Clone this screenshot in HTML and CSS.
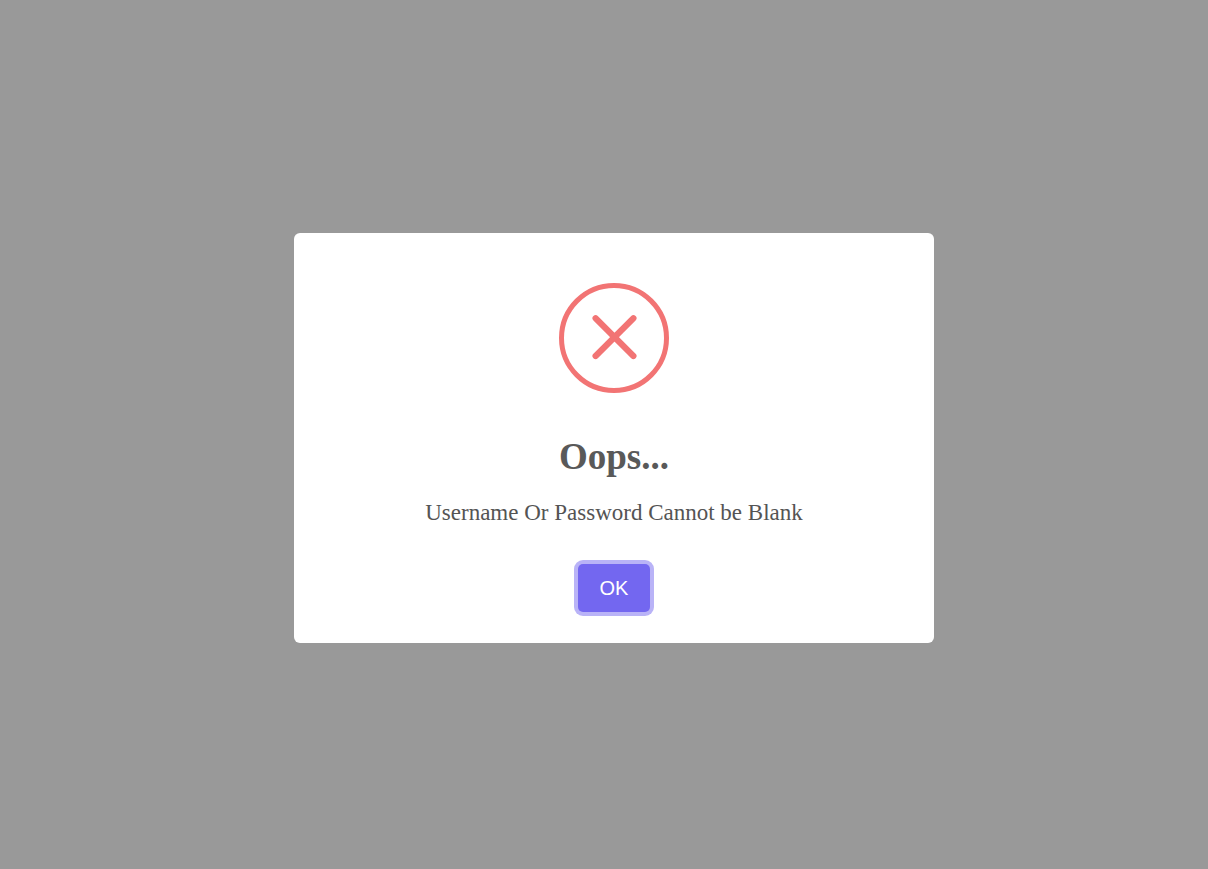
FILE: index.html
```html
<!DOCTYPE html>
<html lang="en">
<head>
  <meta charset="utf-8">
  <meta name="viewport" content="width=device-width, initial-scale=1">
  <title>Login error</title>
  <link rel="stylesheet" href="styles.css">
</head>
<body>
  <div class="overlay">
    <div class="popup" role="alertdialog" aria-modal="true" aria-labelledby="popup-title" aria-describedby="popup-text">
      <svg class="popup-icon" viewBox="0 0 110 110" fill="none" stroke="currentColor" aria-hidden="true">
        <circle cx="55" cy="55" r="52.5" stroke-width="5"/>
        <path d="M36.6 35.2 L74.4 73 M74.4 35.2 L36.6 73" stroke-width="6.2" stroke-linecap="round"/>
      </svg>
      <h2 class="popup-title" id="popup-title">Oops...</h2>
      <p class="popup-text" id="popup-text">Username Or Password Cannot be Blank</p>
      <button class="popup-confirm" type="button">OK</button>
    </div>
  </div>
</body>
</html>
```
FILE: styles.css
```css
* {
  box-sizing: border-box;
}

body {
  margin: 0;
  background: #999;
  font-family: "Liberation Serif", "Times New Roman", serif;
}

.overlay {
  display: flex;
  align-items: center;
  justify-content: center;
  min-height: 100vh;
  padding: 7px 0 0 20px;
}

.popup {
  display: flex;
  flex-direction: column;
  align-items: center;
  width: 100%;
  max-width: 640px;
  padding: 50px 20px 31px;
  border-radius: 6px;
  background: #fff;
  color: #545454;
  text-align: center;
}

.popup-icon {
  width: 110px;
  height: 110px;
  color: #f27474;
}

.popup-title {
  margin: 42px 0 0;
  color: #595959;
  font-size: 37px;
  font-weight: 700;
  line-height: 44px;
}

.popup-text {
  margin: 21px 0 0;
  font-size: 23px;
  line-height: 26px;
}

.popup-confirm {
  min-width: 72px;
  height: 48px;
  margin: 38px 0 0;
  padding: 0 20px;
  border: 0;
  border-radius: 5px;
  background: #7367f0;
  box-shadow: 0 0 0 4px #b9b3f7;
  color: #fff;
  font-family: "Liberation Sans", Arial, sans-serif;
  font-size: 20px;
  cursor: pointer;
}
```
